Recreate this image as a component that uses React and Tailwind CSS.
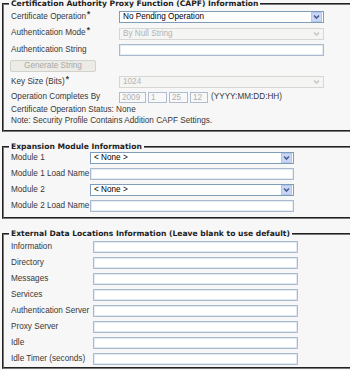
import React from "react";

const Chevron = ({ disabled }) => (
  <svg width="9" height="8" viewBox="0 0 9 8">
    <polyline
      points="2,2.5 4.5,5 7,2.5"
      fill="none"
      stroke={disabled ? "#c9c9c9" : "#4a5f8a"}
      strokeWidth="1.6"
    />
  </svg>
);

const Select = ({ value, disabled, width = "w-[205px]" }) => (
  <div
    className={`${width} h-[12px] flex items-center border ${
      disabled ? "border-[#d6d6d2] bg-[#f5f5f3] text-[#b3b3b3]" : "border-[#7f9db9] bg-white text-black"
    }`}
  >
    <span className="flex-1 pl-[3px] leading-[10px] whitespace-nowrap">{value}</span>
    <span
      className={`w-[11px] h-[10px] mr-[1px] flex items-center justify-center ${
        disabled ? "" : "bg-[#c8d6f7] border border-[#b4c6ee]"
      }`}
    >
      <Chevron disabled={disabled} />
    </span>
  </div>
);

const Input = ({ width = "w-[205px]" }) => (
  <div className={`${width} h-[12px] border border-[#a9bad0] bg-white shadow-[inset_0_0_0_1px_#e4ebf3]`} />
);

const Req = () => <span className="relative -top-[2px] ml-[1px] font-bold">*</span>;

const Row = ({ label, labelW, children, h = "h-[16px]" }) => (
  <div className={`flex items-center ${h}`}>
    <div className={`${labelW} shrink-0 whitespace-nowrap`}>{label}</div>
    {children}
  </div>
);

const Fieldset = ({ legend, children, className = "", innerClass = "" }) => (
  <fieldset className={`border-2 [border-style:groove] border-[#777] pl-[5px] pr-2 ${className}`}>
    <legend className="px-[2px] font-['DejaVu_Sans',sans-serif] font-bold text-[7.6px] text-[#1e1e1e] leading-[8px] whitespace-nowrap">
      {legend}
    </legend>
    <div className={`pl-[2px] ${innerClass}`}>{children}</div>
  </fieldset>
);

const DateBox = ({ value, width }) => (
  <div className={`${width} h-[11px] border border-[#aebdd0] bg-[#f8f8f8] text-[#b0b0b0] pl-[2px] leading-[9px]`}>
    {value}
  </div>
);

export default function App() {
  const external = [
    "Information",
    "Directory",
    "Messages",
    "Services",
    "Authentication Server",
    "Proxy Server",
    "Idle",
    "Idle Timer (seconds)",
  ];

  return (
    <div className="w-[350px] h-[370px] overflow-hidden bg-[#f7f7f7] font-['Liberation_Sans',Arial,sans-serif] text-[8.2px] text-[#383838]">
      <div className="w-[420px] pl-[2px]">
        <Fieldset
          legend="Certification Authority Proxy Function (CAPF) Information"
          className="pb-[3px]"
          innerClass="pt-[1px]"
        >
          <Row label={<>Certificate Operation<Req /></>} labelW="w-[108px]">
            <Select value="No Pending Operation" />
          </Row>
          <Row label={<>Authentication Mode<Req /></>} labelW="w-[108px]" h="h-[17px]">
            <Select value="By Null String" disabled />
          </Row>
          <Row label="Authentication String" labelW="w-[108px]">
            <Input />
          </Row>
          <div className="h-[16px] flex items-center">
            <div className="w-[86px] h-[12px] -ml-[1px] border border-[#d2d2cc] rounded-[2px] bg-[#ecebe6] text-[#a9a9a9] flex items-center justify-center leading-[10px]">
              Generate String
            </div>
          </div>
          <Row label={<>Key Size (Bits)<Req /></>} labelW="w-[108px]">
            <Select value="1024" disabled />
          </Row>
          <Row label="Operation Completes By" labelW="w-[108px]" h="h-[15px]">
            <div className="flex items-center gap-[2px]">
              <DateBox value="2009" width="w-[27px]" />
              <DateBox value="1" width="w-[19px]" />
              <DateBox value="25" width="w-[19px]" />
              <DateBox value="12" width="w-[18px]" />
              <span className="ml-[1px]">(YYYY:MM:DD:HH)</span>
            </div>
          </Row>
          <div className="h-[11px] flex items-center">Certificate Operation Status: None</div>
          <div className="h-[11px] flex items-center">Note: Security Profile Contains Addition CAPF Settings.</div>
        </Fieldset>

        <Fieldset
          legend="Expansion Module Information"
          className="mt-[11px] pb-[3px]"
          innerClass="-mt-[1px]"
        >
          <Row label="Module 1" labelW="w-[79px]">
            <Select value="< None >" width="w-[204px]" />
          </Row>
          <Row label="Module 1 Load Name" labelW="w-[79px]">
            <Input width="w-[204px]" />
          </Row>
          <Row label="Module 2" labelW="w-[79px]">
            <Select value="< None >" width="w-[204px]" />
          </Row>
          <Row label="Module 2 Load Name" labelW="w-[79px]">
            <Input width="w-[204px]" />
          </Row>
        </Fieldset>

        <Fieldset
          legend="External Data Locations Information (Leave blank to use default)"
          className="mt-[11px]"
          innerClass="pt-[1px]"
        >
          {external.map((label) => (
            <Row key={label} label={label} labelW="w-[82px]">
              <Input />
            </Row>
          ))}
        </Fieldset>
      </div>
    </div>
  );
}
